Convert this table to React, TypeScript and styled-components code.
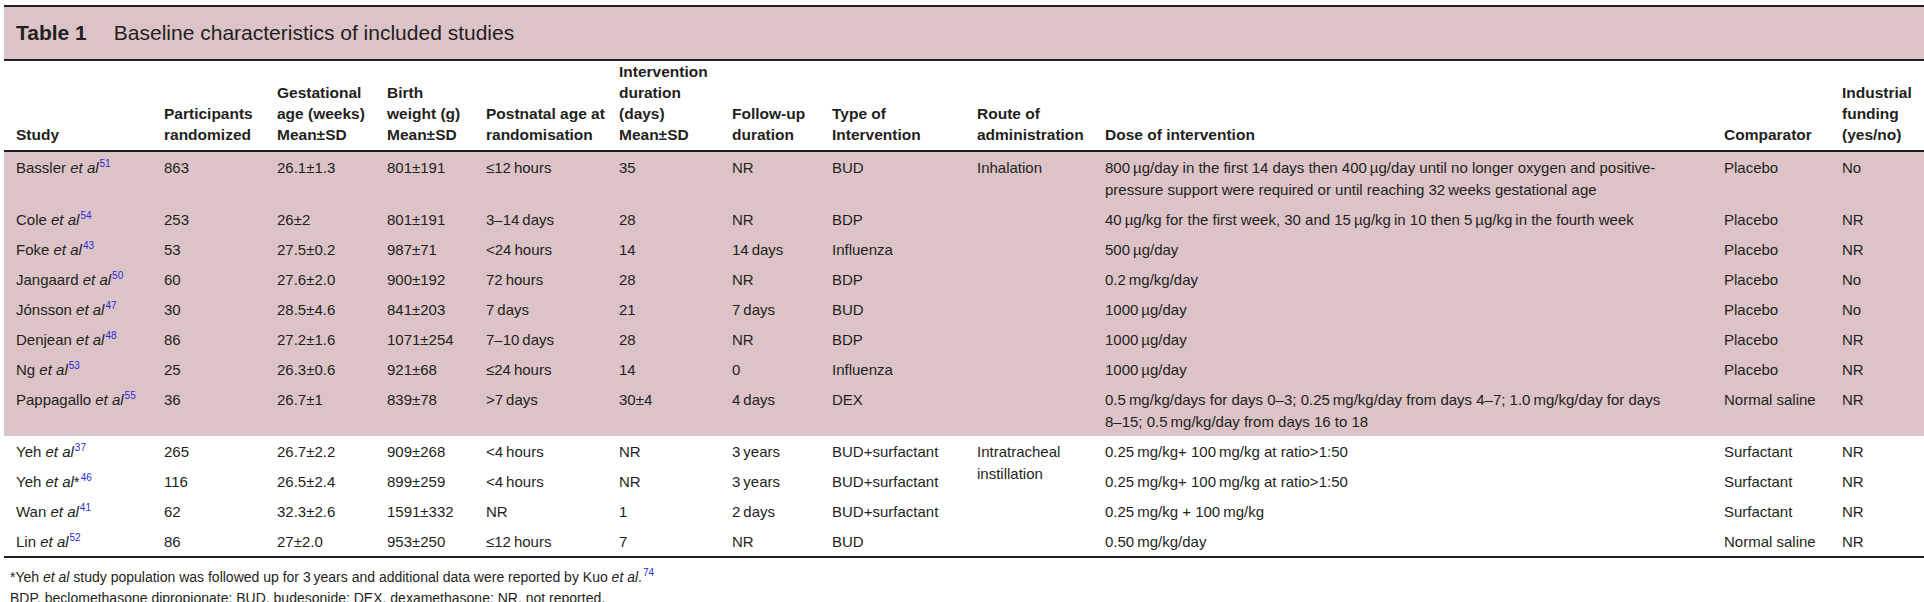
import React from "react";
import styled, { createGlobalStyle } from "styled-components";

const PINK = "#dcc3c8";
const INK = "#231f20";
const LINK = "#2a2ad6";
const T = "\u2009";

const GlobalStyle = createGlobalStyle`
  html, body { margin: 0; padding: 0; background: #ffffff; }
  body { font-family: "Liberation Sans", Arial, sans-serif; color: ${INK}; }
`;

const Page = styled.div`
  padding: 5px 0 0 4px;
  width: 1920px;
`;

const Caption = styled.div`
  display: flex;
  align-items: center;
  height: 52px;
  padding-left: 12px;
  background: ${PINK};
  border-top: 2px solid ${INK};
  border-bottom: 2px solid ${INK};
  font-size: 21px;
`;

const CaptionLabel = styled.span`
  font-weight: 700;
  margin-right: 27px;
`;

const CaptionTitle = styled.span`
  font-weight: 400;
`;

const Table = styled.table`
  width: 1920px;
  table-layout: fixed;
  border-collapse: separate;
  border-spacing: 0;
`;

const Th = styled.th`
  text-align: left;
  vertical-align: bottom;
  font-weight: 700;
  font-size: 15.5px;
  line-height: 21px;
  padding: 0 0 5px 12px;
  border-bottom: 2px solid ${INK};
  white-space: nowrap;
`;

const Td = styled.td<{ $shaded?: boolean; $last?: boolean }>`
  vertical-align: top;
  font-size: 15px;
  line-height: 22px;
  padding: 5px 0 3px 12px;
  background: ${(p) => (p.$shaded ? PINK : "transparent")};
  border-bottom: ${(p) => (p.$last ? `2px solid ${INK}` : "none")};
  white-space: nowrap;
`;

const Ref = styled.sup`
  font-size: 10px;
  line-height: 0;
  vertical-align: 6px;
  color: ${LINK};
  margin-left: 1px;
`;

const Em = styled.i`
  font-style: italic;
`;

const Notes = styled.div`
  padding: 9px 0 0 6px;
  font-size: 14px;
  line-height: 21px;
`;

const colWidths = [148, 113, 110, 99, 133, 113, 100, 145, 128, 619, 118, 94];

const headers: React.ReactNode[] = [
  "Study",
  <>Participants<br />randomized</>,
  <>Gestational<br />age (weeks)<br />Mean±SD</>,
  <>Birth<br />weight (g)<br />Mean±SD</>,
  <>Postnatal age at<br />randomisation</>,
  <>Intervention<br />duration<br />(days)<br />Mean±SD</>,
  <>Follow-up<br />duration</>,
  <>Type of<br />Intervention</>,
  <>Route of<br />administration</>,
  "Dose of intervention",
  "Comparator",
  <>Industrial<br />funding<br />(yes/no)</>,
];

type Row = {
  name: string;
  star?: boolean;
  ref: string;
  n: string;
  ga: string;
  bw: string;
  pna: string;
  dur: string;
  fu: string;
  type: string;
  route?: React.ReactNode;
  routeSpan?: number;
  skipRoute?: boolean;
  dose: React.ReactNode;
  comp: string;
  fund: string;
  shaded: boolean;
};

const rows: Row[] = [
  {
    name: "Bassler", ref: "51", n: "863", ga: "26.1±1.3", bw: "801±191", pna: `≤12${T}hours`, dur: "35", fu: "NR", type: "BUD",
    route: "Inhalation",
    dose: <>800{T}µg/day in the first 14 days then 400{T}µg/day until no longer oxygen and positive-<br />pressure support were required or until reaching 32{T}weeks gestational age</>,
    comp: "Placebo", fund: "No", shaded: true,
  },
  {
    name: "Cole", ref: "54", n: "253", ga: "26±2", bw: "801±191", pna: `3–14${T}days`, dur: "28", fu: "NR", type: "BDP",
    dose: `40${T}µg/kg for the first week, 30 and 15${T}µg/kg${T}in 10 then 5${T}µg/kg${T}in the fourth week`,
    comp: "Placebo", fund: "NR", shaded: true,
  },
  {
    name: "Foke", ref: "43", n: "53", ga: "27.5±0.2", bw: "987±71", pna: `<24${T}hours`, dur: "14", fu: `14${T}days`, type: "Influenza",
    dose: `500${T}µg/day`, comp: "Placebo", fund: "NR", shaded: true,
  },
  {
    name: "Jangaard", ref: "50", n: "60", ga: "27.6±2.0", bw: "900±192", pna: `72${T}hours`, dur: "28", fu: "NR", type: "BDP",
    dose: `0.2${T}mg/kg/day`, comp: "Placebo", fund: "No", shaded: true,
  },
  {
    name: "Jónsson", ref: "47", n: "30", ga: "28.5±4.6", bw: "841±203", pna: `7${T}days`, dur: "21", fu: `7${T}days`, type: "BUD",
    dose: `1000${T}µg/day`, comp: "Placebo", fund: "No", shaded: true,
  },
  {
    name: "Denjean", ref: "48", n: "86", ga: "27.2±1.6", bw: "1071±254", pna: `7–10${T}days`, dur: "28", fu: "NR", type: "BDP",
    dose: `1000${T}µg/day`, comp: "Placebo", fund: "NR", shaded: true,
  },
  {
    name: "Ng", ref: "53", n: "25", ga: "26.3±0.6", bw: "921±68", pna: `≤24${T}hours`, dur: "14", fu: "0", type: "Influenza",
    dose: `1000${T}µg/day`, comp: "Placebo", fund: "NR", shaded: true,
  },
  {
    name: "Pappagallo", ref: "55", n: "36", ga: "26.7±1", bw: "839±78", pna: `>7${T}days`, dur: "30±4", fu: `4${T}days`, type: "DEX",
    dose: <>0.5{T}mg/kg/days for days 0–3; 0.25{T}mg/kg/day from days 4–7; 1.0{T}mg/kg/day for days<br />8–15; 0.5{T}mg/kg/day from days 16 to 18</>,
    comp: "Normal saline", fund: "NR", shaded: true,
  },
  {
    name: "Yeh", ref: "37", n: "265", ga: "26.7±2.2", bw: "909±268", pna: `<4${T}hours`, dur: "NR", fu: `3${T}years`, type: "BUD+surfactant",
    route: <>Intratracheal<br />instillation</>, routeSpan: 2,
    dose: `0.25${T}mg/kg+ 100${T}mg/kg at ratio>1:50`, comp: "Surfactant", fund: "NR", shaded: false,
  },
  {
    name: "Yeh", star: true, ref: "46", n: "116", ga: "26.5±2.4", bw: "899±259", pna: `<4${T}hours`, dur: "NR", fu: `3${T}years`, type: "BUD+surfactant",
    skipRoute: true,
    dose: `0.25${T}mg/kg+ 100${T}mg/kg at ratio>1:50`, comp: "Surfactant", fund: "NR", shaded: false,
  },
  {
    name: "Wan", ref: "41", n: "62", ga: "32.3±2.6", bw: "1591±332", pna: "NR", dur: "1", fu: `2${T}days`, type: "BUD+surfactant",
    dose: `0.25${T}mg/kg + 100${T}mg/kg`, comp: "Surfactant", fund: "NR", shaded: false,
  },
  {
    name: "Lin", ref: "52", n: "86", ga: "27±2.0", bw: "953±250", pna: `≤12${T}hours`, dur: "7", fu: "NR", type: "BUD",
    dose: `0.50${T}mg/kg/day`, comp: "Normal saline", fund: "NR", shaded: false,
  },
];

export default function App() {
  return (
    <>
      <GlobalStyle />
      <Page>
        <Caption>
          <CaptionLabel>Table 1</CaptionLabel>
          <CaptionTitle>Baseline characteristics of included studies</CaptionTitle>
        </Caption>
        <Table>
          <colgroup>
            {colWidths.map((w, i) => (
              <col key={i} style={{ width: w }} />
            ))}
          </colgroup>
          <thead>
            <tr>
              {headers.map((h, i) => (
                <Th key={i}>{h}</Th>
              ))}
            </tr>
          </thead>
          <tbody>
            {rows.map((r, i) => {
              const last = i === rows.length - 1;
              const cell = (content: React.ReactNode, key: string, span?: number) => (
                <Td key={key} $shaded={r.shaded} $last={last} rowSpan={span}>
                  {content}
                </Td>
              );
              return (
                <tr key={i}>
                  {cell(
                    <>
                      {r.name} <Em>et al</Em>
                      {r.star ? "*" : ""}
                      <Ref>{r.ref}</Ref>
                    </>,
                    "s"
                  )}
                  {cell(r.n, "n")}
                  {cell(r.ga, "ga")}
                  {cell(r.bw, "bw")}
                  {cell(r.pna, "pna")}
                  {cell(r.dur, "dur")}
                  {cell(r.fu, "fu")}
                  {cell(r.type, "type")}
                  {r.skipRoute ? null : cell(r.route ?? "", "route", r.routeSpan)}
                  {cell(r.dose, "dose")}
                  {cell(r.comp, "comp")}
                  {cell(r.fund, "fund")}
                </tr>
              );
            })}
          </tbody>
        </Table>
        <Notes>
          <div>
            *Yeh <Em>et al</Em> study population was followed up for 3{T}years and additional data were reported by Kuo{" "}
            <Em>et al</Em>.<Ref>74</Ref>
          </div>
          <div>BDP, beclomethasone dipropionate; BUD, budesonide; DEX, dexamethasone; NR, not reported.</div>
        </Notes>
      </Page>
    </>
  );
}
